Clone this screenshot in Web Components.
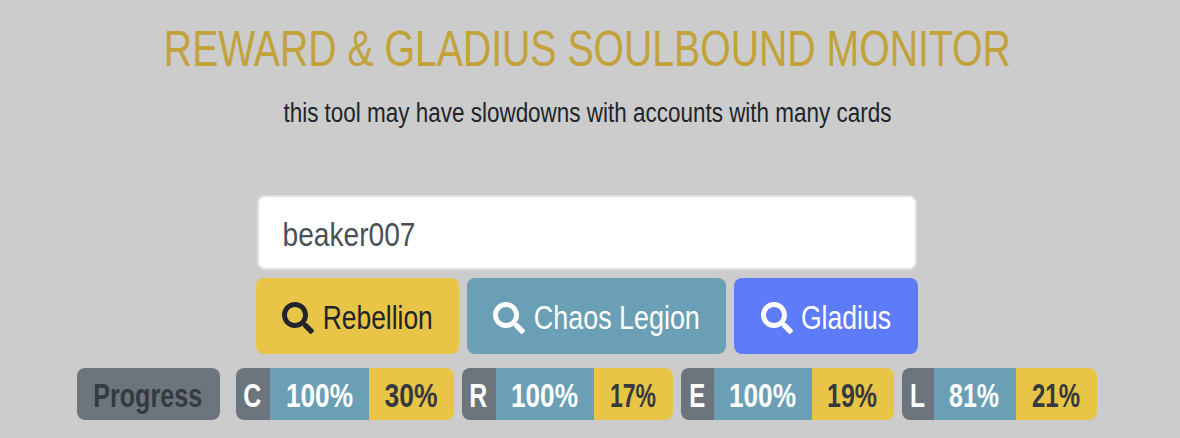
<!DOCTYPE html>
<html><head><meta charset="utf-8">
<style>
html,body{margin:0;padding:0;background:#ccc;}
body{width:1173px;height:438px;overflow:hidden;font-family:"Liberation Sans",sans-serif;}
</style></head>
<body>
<monitor-app>
  <monitor-search slot="search" value="beaker007"></monitor-search>
  <monitor-progress slot="progress"></monitor-progress>
</monitor-app>
<script>
const SEARCH='M505 442.7L405.3 343c-4.5-4.5-10.6-7-17-7H372c27.6-35.3 44-79.7 44-128C416 93.1 322.9 0 208 0S0 93.1 0 208s93.1 208 208 208c48.3 0 92.7-16.4 128-44v16.3c0 6.4 2.5 12.5 7 17l99.7 99.7c9.4 9.4 24.6 9.4 33.9 0l28.3-28.3c9.4-9.4 9.4-24.6.1-34zM208 336c-70.7 0-128-57.2-128-128 0-70.7 57.2-128 128-128 70.7 0 128 57.2 128 128 0 70.7-57.2 128-128 128z';
/* Condensed text: no narrow family is installed, so the run is squeezed to a target width around its centre */
class CondText extends HTMLElement{
  constructor(){super();this.attachShadow({mode:'open'}).innerHTML=`<style>
:host{display:inline-block;white-space:nowrap}
span{display:inline-block;transform-origin:50% 50%}
</style><span><slot></slot></span>`;}
  connectedCallback(){
    const w=+this.getAttribute('w');this.style.width=w+'px';
    const s=this.shadowRoot.querySelector('span');
    const n=s.getBoundingClientRect().width;
    s.style.marginLeft=((w-n)/2)+'px';
    s.style.transform='scaleX('+(w/n)+')';
  }
}
customElements.define('cond-text',CondText);
class MonitorButton extends HTMLElement{constructor(){super();this.attachShadow({mode:'open'}).innerHTML=`<style>
:host{display:flex;align-items:center;justify-content:center;gap:var(--gap,8px);height:76px;padding:4px 0 0 var(--pl,0);border-radius:8px;font-size:33px;box-sizing:border-box;background:var(--bg);color:var(--fg)}
svg{width:32px;height:32px;fill:currentColor;flex:none}
</style><svg viewBox="0 0 512 512"><path d="${SEARCH}"/></svg><slot></slot>`;}}
customElements.define('monitor-button',MonitorButton);
class MonitorPill extends HTMLElement{constructor(){super();
const g=n=>this.getAttribute(n);
this.attachShadow({mode:'open'}).innerHTML=`<style>
:host{display:flex;height:52px;border-radius:8px;overflow:hidden;font-size:34px;font-weight:700;line-height:54px}
span{display:flex;justify-content:center}
.l{background:#6c757d;color:#fff;width:var(--a)}
.b{background:#6a9fb5;color:#fff;width:var(--b)}
.y{background:#e9c547;color:#343a40;width:var(--c)}
</style><span class="l"><cond-text w="${g('lw')}">${g('l')}</cond-text></span><span class="b"><cond-text w="${g('bw')}">${g('b')}</cond-text></span><span class="y"><cond-text w="${g('yw')}">${g('y')}</cond-text></span>`;}}
customElements.define('monitor-pill',MonitorPill);
class MonitorProgress extends HTMLElement{constructor(){super();this.attachShadow({mode:'open'}).innerHTML=`<style>
:host{display:flex;gap:8px;margin-top:14px}
.p{box-sizing:border-box;width:143px;height:52px;margin-right:8px;border-radius:8px;background:#6c757d;color:#343a40;font-size:34px;font-weight:700;line-height:54px;display:flex;justify-content:center;overflow:hidden}
</style><div class="p"><cond-text w="109">Progress</cond-text></div>
<monitor-pill l="C" lw="18" b="100%" bw="67" y="30%" yw="53" style="--a:34px;--b:99px;--c:85px"></monitor-pill>
<monitor-pill l="R" lw="18" b="100%" bw="67" y="17%" yw="46" style="--a:34px;--b:98px;--c:79px"></monitor-pill>
<monitor-pill l="E" lw="16" b="100%" bw="67" y="19%" yw="50" style="--a:33px;--b:98px;--c:82px"></monitor-pill>
<monitor-pill l="L" lw="15" b="81%" bw="50" y="21%" yw="48" style="--a:32px;--b:82px;--c:81px"></monitor-pill>`;}}
customElements.define('monitor-progress',MonitorProgress);
class MonitorSearch extends HTMLElement{constructor(){super();this.attachShadow({mode:'open'}).innerHTML=`<style>
:host{display:flex;flex-direction:column;gap:8px;width:662px}
.input{box-sizing:border-box;height:75px;margin:0 0 0 1px;width:660px;background:#fff;border:2px solid #dee2e6;border-radius:8px;padding:4px 24px 0;display:flex;align-items:center;font-size:33px;color:#495057}
.row{display:flex;gap:8px}
monitor-button:nth-child(1){width:203px;--bg:#e9c547;--fg:#212529;--gap:9px;--pl:1px}
monitor-button:nth-child(2){width:259px;--bg:#6a9fb5;--fg:#fff;--gap:9px;--pl:1px}
monitor-button:nth-child(3){width:184px;--bg:#5e7bf9;--fg:#fff}
</style><div class="input"><cond-text w="133">${this.getAttribute('value')}</cond-text></div><div class="row"><monitor-button><cond-text w="110">Rebellion</cond-text></monitor-button><monitor-button><cond-text w="166">Chaos Legion</cond-text></monitor-button><monitor-button><cond-text w="90">Gladius</cond-text></monitor-button></div>`;}}
customElements.define('monitor-search',MonitorSearch);
class MonitorApp extends HTMLElement{constructor(){super();this.attachShadow({mode:'open'}).innerHTML=`<style>
:host{display:flex;flex-direction:column;align-items:center;color:#212529}
h1{margin:0 0 0 2px;padding-top:23px;font-size:50px;line-height:53px;font-weight:400;color:#c2a239;white-space:nowrap}
p{margin:0 0 0 2px;padding-top:21px;font-size:27px;line-height:32px;height:98px;color:#212529}
</style><h1><cond-text w="847">REWARD &amp; GLADIUS SOULBOUND MONITOR</cond-text></h1><p><cond-text w="608">this tool may have slowdowns with accounts with many cards</cond-text></p><slot name="search"></slot><slot name="progress"></slot>`;}}
customElements.define('monitor-app',MonitorApp);
</script>
</body></html>
